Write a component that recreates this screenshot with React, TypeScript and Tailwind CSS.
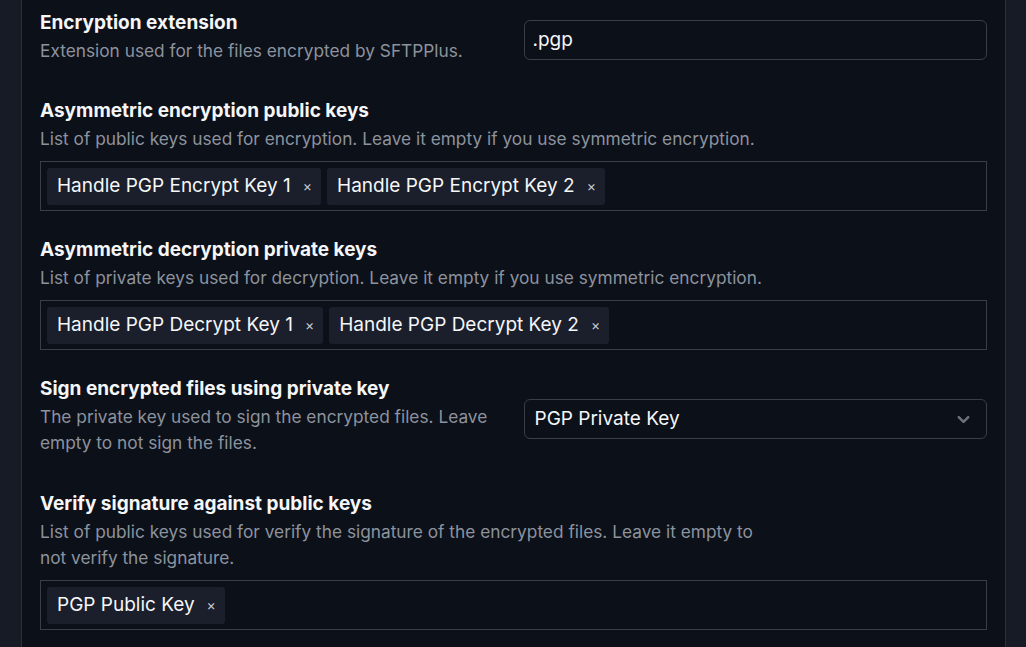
import { ChevronDown } from "lucide-react"

type Field = {
  label: string
  help: string
}

function Label({ label, help }: Field) {
  return (
    <div>
      <div className="text-[19px] font-bold leading-7 text-[#f5f6f8]">{label}</div>
      <p className="mt-px max-w-[735px] text-[17.3px] leading-[26px] text-[#8c939f]">{help}</p>
    </div>
  )
}

function Chip({ text }: { text: string }) {
  return (
    <span className="inline-flex h-[37px] items-center rounded-[3px] bg-[#1a1f2b] pl-[10px] pr-[9px] text-[19px] text-[#f5f6f8]">
      {text}
      <span className="ml-[12px] text-[14px] leading-none text-[#c9ccd3]">×</span>
    </span>
  )
}

function TagBox({ tags }: { tags: string[] }) {
  return (
    <div className="mt-[9px] flex h-[50px] items-center gap-[6px] border border-[#383e4a] px-[6px]">
      {tags.map((t) => (
        <Chip key={t} text={t} />
      ))}
    </div>
  )
}

export default function App() {
  return (
    <div
      className="flex h-[647px] overflow-hidden bg-[#161b26]"
      style={{ fontFamily: "Inter, 'Noto Sans', sans-serif" }}
    >
      <div className="w-[21px] shrink-0" />
      <main className="w-[985px] shrink-0 border-x border-[#2b313c] bg-[#0c1018] pl-[18px] pr-[18px] pt-[9px]">
        <div className="grid grid-cols-2 gap-x-5">
          <Label label="Encryption extension" help="Extension used for the files encrypted by SFTPPlus." />
          <div className="pt-[11px]">
            <div className="flex h-[40px] items-center rounded-md border border-[#383e4a] px-[8px] text-[19px] text-[#f5f6f8]">
              .pgp
            </div>
          </div>
        </div>

        <section className="mt-[33px]">
          <Label
            label="Asymmetric encryption public keys"
            help="List of public keys used for encryption. Leave it empty if you use symmetric encryption."
          />
          <TagBox tags={["Handle PGP Encrypt Key 1", "Handle PGP Encrypt Key 2"]} />
        </section>

        <section className="mt-[25px]">
          <Label
            label="Asymmetric decryption private keys"
            help="List of private keys used for decryption. Leave it empty if you use symmetric encryption."
          />
          <TagBox tags={["Handle PGP Decrypt Key 1", "Handle PGP Decrypt Key 2"]} />
        </section>

        <div className="mt-[25px] grid grid-cols-2 gap-x-5">
          <Label
            label="Sign encrypted files using private key"
            help="The private key used to sign the encrypted files. Leave empty to not sign the files."
          />
          <div className="pt-[24px]">
            <div className="flex h-[40px] items-center justify-between rounded-md border border-[#383e4a] pl-[10px] pr-[13px] text-[19px] text-[#f5f6f8]">
              PGP Private Key
              <ChevronDown size={19} strokeWidth={3.2} className="text-[#6b717d]" />
            </div>
          </div>
        </div>

        <section className="mt-[34px]">
          <Label
            label="Verify signature against public keys"
            help="List of public keys used for verify the signature of the encrypted files. Leave it empty to not verify the signature."
          />
          <TagBox tags={["PGP Public Key"]} />
        </section>
      </main>
    </div>
  )
}
